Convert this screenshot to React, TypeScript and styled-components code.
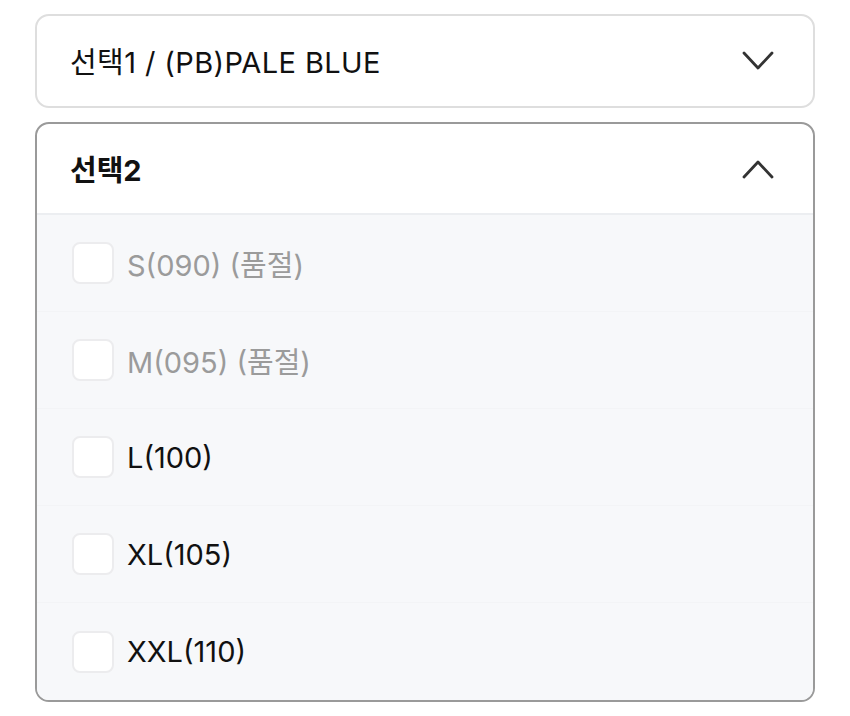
import React from "react";
import styled, { createGlobalStyle } from "styled-components";

const Global = createGlobalStyle`
  html, body { margin: 0; padding: 0; background: #ffffff; }
  body { font-family: Inter, "Noto Sans CJK KR", "Noto Sans", sans-serif; -webkit-font-smoothing: antialiased; }
`;

const Page = styled.div`
  display: flex;
  flex-direction: column;
  gap: 14px;
  padding: 14px 35px 0 35px;
  width: 780px;
`;

const Panel = styled.div<{ $open?: boolean }>`
  border: 2px solid ${(p) => (p.$open ? "#9a9a9a" : "#dedede")};
  border-radius: 14px;
  background: #ffffff;
  overflow: hidden;
`;

const Header = styled.div<{ $open?: boolean }>`
  display: flex;
  align-items: center;
  justify-content: space-between;
  height: ${(p) => (p.$open ? "91px" : "90px")};
  padding: 0 39px 0 33px;
  border-bottom: ${(p) => (p.$open ? "2px solid #eceef1" : "none")};
  box-sizing: border-box;
`;

const Title = styled.span<{ $bold?: boolean }>`
  font-size: 29px;
  font-weight: ${(p) => (p.$bold ? 700 : 400)};
  color: #111111;
  letter-spacing: ${(p) => (p.$bold ? "0" : "0.4px")};
  margin-top: -2px;
`;

const List = styled.div`
  background: #f7f8fa;
  display: flex;
  flex-direction: column;
`;

const Row = styled.div<{ $last?: boolean }>`
  display: flex;
  align-items: center;
  gap: 13px;
  height: 97px;
  padding-left: 35px;
  box-sizing: border-box;
  border-bottom: ${(p) => (p.$last ? "none" : "1px solid #f3f4f6")};
`;

const Box = styled.span`
  width: 38px;
  height: 38px;
  border: 2px solid #ececee;
  border-radius: 8px;
  background: #ffffff;
  flex: none;
`;

const Label = styled.span<{ $disabled?: boolean }>`
  font-size: 29px;
  color: ${(p) => (p.$disabled ? "#9b9b9b" : "#111111")};
  letter-spacing: 0;
`;

const Chevron = ({ up }: { up?: boolean }) => (
  <svg width="32" height="20" viewBox="0 0 32 20" fill="none">
    <path
      d={up ? "M2 18 L16 3 L30 18" : "M2 2 L16 17 L30 2"}
      stroke="#333333"
      strokeWidth="2.8"
      strokeLinecap="round"
      strokeLinejoin="round"
    />
  </svg>
);

const sizes = [
  { label: "S(090) (품절)", disabled: true },
  { label: "M(095) (품절)", disabled: true },
  { label: "L(100)", disabled: false },
  { label: "XL(105)", disabled: false },
  { label: "XXL(110)", disabled: false },
];

export default function App() {
  return (
    <>
      <Global />
      <Page>
        <Panel>
          <Header>
            <Title>선택1 / (PB)PALE BLUE</Title>
            <Chevron />
          </Header>
        </Panel>
        <Panel $open>
          <Header $open>
            <Title $bold>선택2</Title>
            <Chevron up />
          </Header>
          <List>
            {sizes.map((s, i) => (
              <Row key={s.label} $last={i === sizes.length - 1}>
                <Box />
                <Label $disabled={s.disabled}>{s.label}</Label>
              </Row>
            ))}
          </List>
        </Panel>
      </Page>
    </>
  );
}
